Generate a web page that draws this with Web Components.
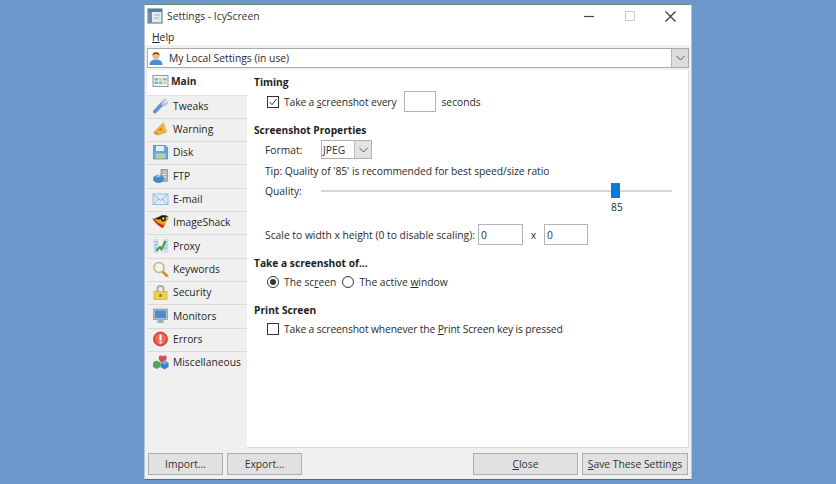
<!DOCTYPE html>
<html>
<head>
<meta charset="utf-8">
<title>Settings - IcyScreen</title>
<style>
  html, body { margin: 0; height: 100%; }
  body {
    background: #6b97cb;
    font-family: "Open Sans", "Noto Sans", sans-serif;
    font-size: 10.300px;
    color: #222;
    overflow: hidden;
    padding: 4px 0 0 144px;
    box-sizing: border-box;
  }
  u { text-decoration: underline; text-underline-offset: 1px; }
  svg { display: block; }
</style>
</head>
<body>
<template id="icons">
  <svg data-i="app" viewBox="0 0 16 16"><rect x="1" y="1" width="14" height="14" fill="#e6ebf0" stroke="#4a6c90"/><rect x="1" y="1" width="14" height="3" fill="#54809f"/><rect x="1" y="4" width="4" height="11" fill="#6a8fb0"/><path d="M7 7h6M7 10h5" stroke="#aab"/></svg>
  <svg data-i="user" viewBox="0 0 16 16"><path d="M1.500 15c0-4 2.500-5.500 6.500-5.500s6.500 1.500 6.500 5.500z" fill="#4a8fd0"/><circle cx="8" cy="5.500" r="3.600" fill="#e9b98c"/><path d="M4.400 5.500C4 1 12 1 11.600 5.500 10 3.500 6 3.500 4.400 5.500z" fill="#7a4a20"/></svg>
  <svg data-i="main" viewBox="0 0 16 16"><rect x=".5" y="2.500" width="15" height="11" fill="#eef3f8" stroke="#7f9cb8"/><path d="M2 5h3.500v2.500H2z" fill="#8dc07c"/><path d="M6.300 5h3.500v2.500H6.300z" fill="#e6cf75"/><path d="M10.600 5h3.500v2.500h-3.500z" fill="#86b0dc"/><path d="M2 8.500h3.500V11H2z" fill="#86b0dc"/><path d="M6.300 8.500h3.500V11H6.300z" fill="#8dc07c"/><path d="M10.600 8.500h3.500V11h-3.500z" fill="#e6cf75"/></svg>
  <svg data-i="tweaks" viewBox="0 0 16 16"><path d="M2.500 13.500 9.500 6" stroke="#5f95d2" stroke-width="4" stroke-linecap="round"/><path d="M9 6.500C8 3.500 10.500 1 13.500 1.500L11 4l1.500 1.500L15 3.500c.5 3-2.500 5-5 4z" fill="#c3c9d0" stroke="#9aa2ab" stroke-width=".5"/></svg>
  <svg data-i="warning" viewBox="0 0 16 16"><path d="M1 11.500 11 2l3 9-8.500 3z" fill="#f0b840" stroke="#c88a1c" stroke-width=".6"/><path d="M11 2c1.500-.5 3.500 5.500 3 9-1-3-2-6-3-9z" fill="#fbe08a"/><path d="M5 9.500 9 6l1 4z" fill="#d58e1e"/><circle cx="3.700" cy="12.300" r="1.400" fill="#c88a1c"/></svg>
  <svg data-i="disk" viewBox="0 0 16 16"><path d="M1 1.500h12l2 2V15H1z" fill="#6aa6de" stroke="#4a82ba" stroke-width=".7"/><rect x="3.500" y="2" width="8" height="5" fill="#e6eef6"/><rect x="3" y="9.500" width="10" height="5" fill="#b2d69a"/></svg>
  <svg data-i="ftp" viewBox="0 0 16 16"><rect x="8.500" y="1.500" width="6.500" height="12" fill="#a8b0b8" stroke="#7c848c" stroke-width=".6"/><path d="M10 4h4M10 6.500h4M10 9h4" stroke="#e4e8ec"/><ellipse cx="6" cy="11" rx="5.500" ry="4" fill="#4a86cc"/><path d="M3 9.500c1.500-2 3-3 5-3L8 9c-2 0-3.500.5-5 .5z" fill="#9cc4ec"/></svg>
  <svg data-i="email" viewBox="0 0 16 16"><rect x=".5" y="3" width="15" height="10.500" fill="#dcebf8" stroke="#98bbda"/><path d="M1 3.500 8 9.500l7-6M1 13l5-5M15 13l-5-5" fill="none" stroke="#8bb2d6"/></svg>
  <svg data-i="imageshack" viewBox="0 0 18 16"><path d="M.5 4.500C4 4 6 3.500 8 2c2-1.500 7-1.500 9 0 1 2 0 4.500-2 5.500-.5 3-2 6-3.500 7C8.500 13 3 9 .5 4.500z" fill="#e3a81d"/><path d="M.5 4.500C3 9 8.500 13 11.500 14.500L13 11C9 10.500 4.500 8 2.500 4.500z" fill="#c8301a"/><path d="M3 4C6 3.500 8 2.500 9.500 1.500c2.500-1 5.500-.5 7.500.5-.5-.5-9 6-14 2z" fill="#222"/><circle cx="12" cy="4.500" r="2.700" fill="#1a1a1a"/><circle cx="12" cy="4.200" r="1.300" fill="#ece080"/></svg>
  <svg data-i="proxy" viewBox="0 0 16 16"><rect x="1" y="1" width="5" height="14" fill="#cfe0f0"/><rect x="10.500" y="1" width="5" height="14" fill="#cfe0f0"/><path d="M1.500 4h4M1.500 7h4M1.500 10h4M11 4h4M11 7h4M11 10h4" stroke="#8fb0d0"/><path d="M3.500 13 7.500 9 9 11.500 13 3" fill="none" stroke="#3ba03b" stroke-width="2"/></svg>
  <svg data-i="keywords" viewBox="0 0 16 16"><path d="m9.500 10 5 5" stroke="#c98d3c" stroke-width="2.600" stroke-linecap="round"/><circle cx="6.500" cy="6.500" r="5" fill="#f6f3e8" stroke="#c9b48a" stroke-width="1.500"/></svg>
  <svg data-i="security" viewBox="0 0 16 16"><path d="M4 8V5a4 4 0 0 1 8 0v3h-2V5a2 2 0 0 0-4 0v3z" fill="#a8aeb5"/><rect x="1.500" y="7.500" width="13" height="8" fill="#f0cf4e" stroke="#c9a12a" stroke-width=".6"/><rect x="7" y="10" width="2" height="3" fill="#8a6d14"/></svg>
  <svg data-i="monitors" viewBox="0 0 16 16"><rect x="1" y="1" width="14" height="10.500" fill="#b5bdc6" stroke="#7f8891" stroke-width=".6"/><rect x="2.500" y="2.500" width="11" height="7.500" fill="#4f8ad4"/><rect x="5" y="11.500" width="6" height="3.500" fill="#a5adb5"/></svg>
  <svg data-i="errors" viewBox="0 0 16 16"><circle cx="8" cy="8" r="7" fill="#e2483a" stroke="#b93024" stroke-width=".7"/><circle cx="8" cy="8" r="5.500" fill="#ee6a58"/><rect x="7" y="3.500" width="2" height="6" fill="#fff"/><rect x="7" y="10.500" width="2" height="2" fill="#fff"/></svg>
  <svg data-i="misc" viewBox="0 0 16 16"><path d="M8.500 8C5 5 6 1 9 1.500c.7.100 1 .5 1.300 1 .5-.8 2-1.500 3.200-.5 1.500 1.500.5 4-2 6z" fill="#d84a50"/><path d="M8 8.500l4-2 4 2v4.500l-4 2.500L8 13z" fill="#3f7fd0"/><path d="M8 8.500l4 2 4-2-4-2z" fill="#7aa9e0"/><path d="M.5 8.500l3.500-2 4 2v4.500l-4 2-3.500-2z" fill="#5aa45a"/></svg>
</template>

<icy-window>
  <icy-titlebar slot="title">Settings - IcyScreen</icy-titlebar>
  <icy-menu slot="menu"><span><u>H</u>elp</span></icy-menu>
  <icy-combo slot="combo">My Local Settings (in use)</icy-combo>
  <icy-sidebar slot="side">
    <icy-tab icon="main" active>Main</icy-tab>
    <icy-tab icon="tweaks">Tweaks</icy-tab>
    <icy-tab icon="warning">Warning</icy-tab>
    <icy-tab icon="disk">Disk</icy-tab>
    <icy-tab icon="ftp">FTP</icy-tab>
    <icy-tab icon="email">E-mail</icy-tab>
    <icy-tab icon="imageshack">ImageShack</icy-tab>
    <icy-tab icon="proxy">Proxy</icy-tab>
    <icy-tab icon="keywords">Keywords</icy-tab>
    <icy-tab icon="security">Security</icy-tab>
    <icy-tab icon="monitors">Monitors</icy-tab>
    <icy-tab icon="errors">Errors</icy-tab>
    <icy-tab icon="misc" style="border-bottom-color:transparent">Miscellaneous</icy-tab>
  </icy-sidebar>
  <icy-main-page slot="page"></icy-main-page>
  <icy-button slot="left" w="75">Import...</icy-button>
  <icy-button slot="left" w="75">Export...</icy-button>
  <icy-button slot="right" w="105"><span><u>C</u>lose</span></icy-button>
  <icy-button slot="right" w="106"><span><u>S</u>ave These Settings</span></icy-button>
</icy-window>

<script>
function define(name, css, html, setup) {
  customElements.define(name, class extends HTMLElement {
    constructor() {
      super();
      this.root = this.attachShadow({ mode: 'open' });
      this.root.innerHTML = `<style>${css}</style>${html}`;
    }
    connectedCallback() {
      if (setup) setup(this, this.root);
    }
  });
}

function iconInto(target, name) {
  const src = document.getElementById('icons').content.querySelector(`[data-i="${name}"]`);
  const svg = src.cloneNode(true);
  svg.style.display = 'block';
  svg.style.width = '100%';
  svg.style.height = '100%';
  target.appendChild(svg);
}

define('icy-window', `
  :host { display: flex; flex-direction: column; width: 548px; height: 476px; box-sizing: border-box;
    background: #f0f0f0; border: 1px solid; border-color: #6f8a80 #b5c4d8 #56687c #b5c4d8; }
  .body { flex: 1; display: flex; margin: 0 2px; min-height: 0; }
  .foot { display: flex; justify-content: space-between; padding: 5px 3px 4px 3px; }
  .foot div { display: flex; gap: 4px; }
  .combo { padding: 3px 0 2px 2px; }
  .side { width: 100px; flex: none; }
  .page { flex: 1; background: #fff; border: solid #dcdcdc; border-width: 0 1px 1px 0; }
`, `
  <slot name="title"></slot>
  <slot name="menu"></slot>
  <div class="combo"><slot name="combo"></slot></div>
  <div class="body">
    <div class="side"><slot name="side"></slot></div>
    <div class="page"><slot name="page"></slot></div>
  </div>
  <div class="foot">
    <div><slot name="left"></slot></div>
    <div><slot name="right"></slot></div>
  </div>
`);

define('icy-titlebar', `
  :host { display: flex; align-items: center; height: 22px; background: #fff; padding-left: 2px; color: #333; }
  .ico { width: 16px; height: 16px; margin-right: 4px; }
  .txt { flex: 1; }
  .btn { width: 41px; height: 22px; display: flex; align-items: center; justify-content: center; }
`, `
  <div class="ico"></div>
  <div class="txt"><slot></slot></div>
  <div class="btn"><svg width="10" height="10" viewBox="0 0 10 10"><path d="M0 5.500h10" stroke="#444" stroke-width="1.200"/></svg></div>
  <div class="btn"><svg width="10" height="10" viewBox="0 0 10 10"><rect x=".5" y=".5" width="9" height="9" fill="none" stroke="#ccc"/></svg></div>
  <div class="btn"><svg width="11" height="11" viewBox="0 0 11 11"><path d="M.5.500l10 10M10.500.500l-10 10" stroke="#333" stroke-width="1.100"/></svg></div>
`, (el, root) => iconInto(root.querySelector('.ico'), 'app'));

define('icy-menu', `
  :host { display: flex; align-items: center; height: 18px; box-sizing: border-box; background: #fff; padding: 2px 0 0 7px; }
`, `<slot></slot>`);

define('icy-combo', `
  :host { display: flex; align-items: center; height: 20px; box-sizing: border-box; width: 542px; background: #fff;
    border: 1px solid #a9a9a9; color: #2a2a2a; }
  .ico { width: 16px; height: 16px; margin-right: 5px; }
  .txt { flex: 1; padding-bottom: 1px; }
  .arrow { width: 16px; height: 18px; background: #dcdcdc; border-left: 1px solid #b5b5b5; display: flex; align-items: center; justify-content: center; }
`, `
  <div class="ico"></div>
  <div class="txt"><slot></slot></div>
  <div class="arrow"><svg width="9" height="6" viewBox="0 0 9 6"><path d="M.5 1l4 4 4-4" fill="none" stroke="#555"/></svg></div>
`, (el, root) => iconInto(root.querySelector('.ico'), 'user'));

define('icy-sidebar', `
  :host { display: flex; flex-direction: column; height: 100%; background: #f0f0f0; }
`, `<slot></slot>`);

define('icy-tab', `
  :host { display: flex; align-items: center; height: 23.340px; box-sizing: border-box; padding: 0 0 2px 5px;
    background: #f0f0f0; border-bottom: 1px solid #dadada; color: #262626; }
  :host([active]) { height: 25.500px; background: #fff; font-weight: 700; border-bottom: 1px solid #e0e0e0; font-size: 10.200px; }
  .ico { width: 17px; height: 16px; margin-right: 4px; }
  :host([active]) .ico { margin-right: 2px; }
`, `<div class="ico"></div><slot></slot>`,
  (el, root) => iconInto(root.querySelector('.ico'), el.getAttribute('icon')));

define('icy-button', `
  :host { display: flex; align-items: center; justify-content: center; height: 22px; box-sizing: border-box;
    background: #e1e1e1; border: 1px solid #adadad; color: #333; }
`, `<slot></slot>`, el => { el.style.width = el.getAttribute('w') + 'px'; });

define('icy-check', `
  :host { display: flex; align-items: center; gap: 5px; letter-spacing: -0.130px; }
  .box { width: 12px; height: 12px; flex: none; }
`, `<svg class="box" viewBox="0 0 12 12"><rect x=".5" y=".5" width="11" height="11" fill="#fff" stroke="#333"/><path class="tick" d="M2.500 6l2.500 2.700 4.500-5.700" fill="none" stroke="#333"/></svg><span><slot></slot></span>`,
  (el, root) => { if (!el.hasAttribute('checked')) root.querySelector('.tick').remove(); });

define('icy-radio', `
  :host { display: flex; align-items: center; gap: 5px; }
  svg { width: 12px; height: 12px; flex: none; }
`, `<svg viewBox="0 0 12 12"><circle cx="6" cy="6" r="5.500" fill="#fff" stroke="#333"/><circle class="dot" cx="6" cy="6" r="3" fill="#333"/></svg><span><slot></slot></span>`,
  (el, root) => { if (!el.hasAttribute('checked')) root.querySelector('.dot').remove(); });

define('icy-input', `
  :host { display: flex; align-items: center; height: 21px; box-sizing: border-box; background: #fff;
    border: 1px solid #b4b4b4; padding-left: 2px; color: #333; }
`, `<slot></slot>`, el => { el.style.width = el.getAttribute('w') + 'px'; });

define('icy-select', `
  :host { display: flex; align-items: center; width: 51px; height: 19px; box-sizing: border-box; background: #fff;
    border: 1px solid #b0b0b0; padding-left: 1px; color: #333; }
  .txt { flex: 1; }
  .arrow { width: 16px; height: 17px; background: #e2e2e2; border-left: 1px solid #bbb; display: flex; align-items: center; justify-content: center; }
`, `<div class="txt"><slot></slot></div><div class="arrow"><svg width="9" height="6" viewBox="0 0 9 6"><path d="M.5 1l4 4 4-4" fill="none" stroke="#555"/></svg></div>`);

define('icy-slider', `
  :host { display: block; position: relative; width: 351px; height: 15px; }
  .track { height: 2px; background: #d6d6d6; position: relative; top: 7px; }
  .thumb { position: absolute; left: 290px; top: 0; width: 9px; height: 15px; background: #0a78d7; }
`, `<div class="track"></div><div class="thumb"></div>`);

define('icy-main-page', `
  :host { display: block; padding: 4px 0 0 7px; color: #2b2b2b; }
  h3 { margin: 0; font-size: 10.200px; font-weight: 700; height: 16px; line-height: 16px; color: #1e1e1e; }
  .row { display: flex; align-items: center; padding-left: 11px; }
  .lbl { width: 56px; }
  u { text-decoration: underline; text-underline-offset: 1px; }
`, `
  <h3>Timing</h3>
  <div class="row" style="height:21px;margin-top:1px;padding-left:13px">
    <icy-check checked>Take a <u>s</u>creenshot every</icy-check>
    <icy-input w="32" style="margin:0 5px 0 8px"></icy-input><span>seconds</span>
  </div>
  <h3 style="margin-top:10px">Screenshot Properties</h3>
  <div class="row" style="height:19px;margin-top:2px"><span class="lbl">Format:</span><icy-select>JPEG</icy-select></div>
  <div class="row" style="height:16px;margin-top:4px;letter-spacing:-0.050px">Tip: Quality of '85' is recommended for best speed/size ratio</div>
  <div class="row" style="height:15px;margin-top:4px"><span class="lbl">Quality:</span><icy-slider></icy-slider></div>
  <div class="row" style="height:14px;margin-top:2px;padding-left:357px">85</div>
  <div class="row" style="height:21px;margin-top:10px"><span>Scale to width x height (0 to disable scaling):</span>
    <icy-input w="45" style="margin-left:3px">0</icy-input><span style="width:21px;text-align:center">x</span><icy-input w="44">0</icy-input>
  </div>
  <h3 style="margin-top:10px">Take a screenshot of...</h3>
  <div class="row" style="height:18px;margin-top:2px;padding-left:13px;gap:6px">
    <icy-radio checked>The sc<u>r</u>een</icy-radio><icy-radio>The active <u>w</u>indow</icy-radio>
  </div>
  <h3 style="margin-top:11px">Print Screen</h3>
  <div class="row" style="height:18px;margin-top:2px;padding-left:13px">
    <icy-check>Take a screenshot whenever the <u>P</u>rint Screen key is pressed</icy-check>
  </div>
`);
</script>
</body>
</html>
